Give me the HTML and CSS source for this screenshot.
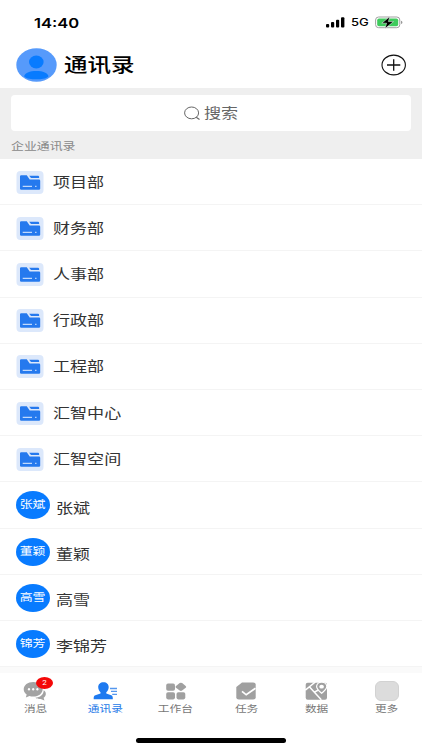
FILE: index.html
```
<!DOCTYPE html>
<html lang="zh-CN">
<head>
<meta charset="utf-8">
<title>通讯录</title>
<link rel="stylesheet" href="styles.css">
</head>
<body>
<svg class="defs" width="0" height="0" aria-hidden="true">
  <symbol id="folder" viewBox="0 0 27 23">
    <rect width="27" height="23" rx="4" fill="#dce8fb"/>
    <path d="M3.5 5.3Q3.5 4.3 4.8 4.3H10.3L13.2 8.6H22.5Q23.7 8.6 23.7 9.7V17.7Q23.7 18.8 22.4 18.8H4.8Q3.5 18.8 3.5 17.7Z" fill="#2579ee"/>
    <path d="M12.7 4.7H21.5Q22.6 4.7 22.6 5.8V7H14.5Z" fill="#2579ee"/>
    <path d="M6.2 15.3H15.5M18.6 15.3H20" stroke="#e6f0ff" stroke-width="1"/>
  </symbol>
</svg>
<div class="screen">
  <div class="status">
    <span class="time wide">14:40</span>
    <div class="signals">
      <svg width="19" height="11" viewBox="0 0 19 11"><rect x="0" y="7" width="3.2" height="3.5" rx="1"/><rect x="5" y="5" width="3.2" height="5.5" rx="1"/><rect x="10" y="2.7" width="3.2" height="7.8" rx="1"/><rect x="15" y=".3" width="3.4" height="10.2" rx="1"/></svg>
      <span class="net wide">5G</span>
      <svg class="battery" width="28" height="13" viewBox="0 0 28 13"><rect x=".6" y="1" width="24.2" height="10.7" rx="3" fill="#fff" stroke="#a0a0a0"/><rect x="2.2" y="2.5" width="21" height="7.7" rx="1.8" fill="#3ecb5c"/><path d="M26 4.8Q27.4 5.2 27.4 6.4T26 8Z" fill="#999"/><path d="M14.8.6L6.8 7.2H11.6L10 12.6L18.5 5.600H13.4Z" stroke="#fff" stroke-width=".5"/></svg>
    </div>
  </div>
  <header class="header">
    <svg width="41" height="34" viewBox="0 0 41 34"><defs><clipPath id="face"><ellipse cx="20.5" cy="17" rx="20.2" ry="16.7"/></clipPath></defs><ellipse cx="20.5" cy="17" rx="20.2" ry="16.7" fill="#569afb"/><ellipse cx="20.3" cy="14" rx="7.3" ry="6.5" fill="#087bff"/><path clip-path="url(#face)" d="M8.2 28.5C8.2 25 14 23 20.3 23S32.4 25 32.4 28.5C30 31 25 31.3 20.3 31.3S10.5 31 8.2 28.5Z" fill="#087bff"/></svg>
    <h1 class="title wide">通讯录</h1>
    <svg class="add" width="26" height="22" viewBox="0 0 26 22"><ellipse cx="12.7" cy="11" rx="11.7" ry="9.9" fill="none" stroke="#111" stroke-width="1.1"/><path d="M6 11H19.3M12.7 5.3V16.7" stroke="#111" stroke-width="1.3"/></svg>
  </header>
  <section class="search-area">
    <div class="search">
      <svg width="17" height="15" viewBox="0 0 17 15"><ellipse cx="7.6" cy="6.9" rx="7" ry="5.9" fill="none" stroke="#666"/><path d="M12.2 11.2L15.5 13.5" stroke="#666" stroke-width="1.1"/></svg>
      <span class="wide">搜索</span>
    </div>
    <div class="caption"><span class="wide">企业通讯录</span></div>
  </section>
  <main class="list">
    <div class="row"><svg class="folder"><use href="#folder"/></svg><span class="wide">项目部</span></div>
    <div class="row"><svg class="folder"><use href="#folder"/></svg><span class="wide">财务部</span></div>
    <div class="row"><svg class="folder"><use href="#folder"/></svg><span class="wide">人事部</span></div>
    <div class="row"><svg class="folder"><use href="#folder"/></svg><span class="wide">行政部</span></div>
    <div class="row"><svg class="folder"><use href="#folder"/></svg><span class="wide">工程部</span></div>
    <div class="row"><svg class="folder"><use href="#folder"/></svg><span class="wide">汇智中心</span></div>
    <div class="row"><svg class="folder"><use href="#folder"/></svg><span class="wide">汇智空间</span></div>
    <div class="row person"><div class="avatar"><span>张斌</span></div><span class="wide">张斌</span></div>
    <div class="row person"><div class="avatar"><span>董颖</span></div><span class="wide">董颖</span></div>
    <div class="row person"><div class="avatar"><span>高雪</span></div><span class="wide">高雪</span></div>
    <div class="row person"><div class="avatar"><span>锦芳</span></div><span class="wide">李锦芳</span></div>
  </main>
  <nav class="tabs">
    <div class="tab">
      <svg width="25" height="20" viewBox="0 0 28 20" preserveAspectRatio="none"><path d="M11.5 1C5.3 1 .8 4.2.8 8.2c0 2.3 1.3 4.1 3.3 5.4L3.2 16.6l4-1.6c1.4.4 2.8.5 4.3.5C17.8 15.500 22 12.200 22 8.200S17.800 1 11.500 1Z" fill="#a3a3a3"/><path d="M23.2 9.3c0 4.300-4 7.300-9.400 7.500 1.500 1 3.700 1.400 6 1.100l4.200 1.500-.9-2.600c3.400-1.900 3.200-5.900.1-7.500Z" fill="#a3a3a3"/><g fill="#fff"><circle cx="6.700" cy="8.200" r="1.200"/><circle cx="11.400" cy="8.200" r="1.200"/><circle cx="16.100" cy="8.200" r="1.200"/></g></svg>
      <span class="badge">2</span>
      <span class="label">消息</span>
    </div>
    <div class="tab active">
      <svg width="28" height="20" viewBox="-1 0 28 20"><path d="M11.500 1.200c-3.200 0-5.300 2.100-5.300 4.900 0 2.300 1 4 2.300 5.100v1.300L3.300 14.300C1.700 15 1.700 16 1.700 18.200H20.800C20.800 16 20.800 15 19.200 14.300L14.300 12.500v-1.300c1.400-1.100 2.400-2.800 2.400-5.100 0-2.800-2-4.900-5.200-4.900Z" fill="#1e7af0"/><path d="M18 7.500H25M19 10.400H25M20.200 13.300H25" stroke="#5597ee" stroke-width="1.300"/></svg>
      <span class="label">通讯录</span>
    </div>
    <div class="tab">
      <svg width="28" height="20" viewBox="0 0 28 20"><g fill="#a0a0a0"><rect x="4.200" y="2.600" width="8.800" height="7.100" rx="1.800"/><rect x="4.200" y="11.300" width="8.800" height="7.100" rx="1.800"/><rect x="14.500" y="11.300" width="8.800" height="7.100" rx="1.800"/><path d="M17.700 2.100Q18.900 1.200 20.100 2.100L23.700 4.900Q24.800 5.900 23.700 6.800L20.100 9.600Q18.900 10.500 17.700 9.600L14 6.800Q12.900 5.900 14 4.900Z"/></g></svg>
      <span class="label">工作台</span>
    </div>
    <div class="tab">
      <svg width="28" height="20" viewBox="0 0 28 20"><path d="M10 1.500H21.200Q23.700 1.500 23.700 3.500V16.500Q23.700 18.600 21.200 18.600H6.800Q4.300 18.600 4.300 16.500V6Z" fill="#a0a0a0"/><path d="M10 10.300L14.200 13.800L23.500 7.200" fill="none" stroke="#fff" stroke-width="1.700"/></svg>
      <span class="label">任务</span>
    </div>
    <div class="tab">
      <svg width="28" height="20" viewBox="0 0 28 20"><rect x="3.700" y="1.700" width="21.300" height="17" rx="2" fill="#a0a0a0"/><path d="M3.300 9.200L13.300 1M7.800 6.200L19.300 18.800M12.500 11.200L16.300 9" fill="none" stroke="#fff" stroke-width="1.500"/><path d="M19.600 12.300C16.500 9.500 14.600 8.200 14.600 5.600 14.600 3 16.800 1.100 19.600 1.100S24.800 3 24.800 5.600C24.800 8.200 22.700 9.500 19.600 12.300Z" fill="#a0a0a0" stroke="#fff" stroke-width="1.200"/><ellipse cx="19.600" cy="5.700" rx="2.300" ry="1.900" fill="#fff"/></svg>
      <span class="label">数据</span>
    </div>
    <div class="tab"><div class="more"></div><span class="label">更多</span></div>
  </nav>
  <div class="home"></div>
</div>
</body>
</html>
```
FILE: styles.css
```
* { box-sizing: border-box; }
body { margin: 0; background: #fff; }
svg { display: block; flex: none; }
.defs { position: absolute; }
.screen {
  width: 422px; height: 750px; overflow: hidden;
  display: flex; flex-direction: column;
  font-family: Roboto, "Noto Sans CJK SC", sans-serif;
  color: #333;
}
.wide { display: inline-block; white-space: nowrap; transform: scaleX(1.218); transform-origin: left center; }
.status { height: 44px; flex: none; display: flex; justify-content: space-between; padding: 0 20px 0 34px; color: #000; }
.time { font: 600 13.600px/20px Inter, sans-serif; margin-top: 13px; }
.signals { display: flex; align-items: center; height: 44px; }
.net { font: 500 10.700px/14px Inter, sans-serif; width: 14px; margin: 1px 10px 0 6px; }
.battery { margin-right: -1px; }
.header { height: 44px; flex: none; display: flex; align-items: center; padding: 0 15px 0 16px; color: #000; }
.header > svg { margin-top: -2px; }
.title { margin: 0 0 0 7px; font-size: 19.300px; line-height: 28px; font-weight: 500; }
.header .add { margin-left: auto; }
.search-area { height: 71px; flex: none; padding: 7px 11px 0; background: #efefef; }
.search { height: 36px; border-radius: 4px; background: #fff; display: flex; align-items: center; padding-left: 173px; gap: 3px; font-size: 14px; line-height: 20px; color: #666; }
.caption { height: 28px; padding-top: 8px; font-size: 10.600px; line-height: 16px; color: #888; }
.caption span { vertical-align: top; }
.list { height: 509px; flex: none; }
.row { height: 46.200px; border-bottom: 1px solid #f4f4f4; display: flex; align-items: center; padding: 1px 0 0 16px; font-size: 14px; line-height: 20px; }
.folder { width: 28px; height: 23px; margin-right: 9px; }
.row .wide { margin-top: -1px; }
.person .wide { margin: 5px 0 0 6px; }
.avatar { width: 34px; height: 28px; border-radius: 50%; background: #087bff; color: #fff; display: flex; align-items: center; justify-content: center; font-size: 10.600px; line-height: 16px; }
.avatar span { transform: scaleX(1.218); }
.tabs { height: 58px; flex: none; border-top: 6px solid #fafafa; margin-top: -1px; display: grid; grid-template-columns: repeat(6, 70.330px); padding-top: 8px; }
.tab { position: relative; display: flex; flex-direction: column; align-items: center; color: #777; }
.label { font-size: 9.600px; line-height: 14px; margin-top: 1px; transform: scaleX(1.218); white-space: nowrap; }
.active { color: #2579e8; }
.badge { position: absolute; left: 36px; top: -4px; width: 17px; height: 12px; border-radius: 50%; background: #f40808; color: #fff; text-align: center; font-size: 8px; line-height: 12px; }
.more { width: 24px; height: 20px; border-radius: 6px; background: #dcdcdc; border: 1px solid #d2d2d2; }
.home { width: 150px; height: 5px; border-radius: 3px; background: #000; margin: 13px auto 0; flex: none; }
```
